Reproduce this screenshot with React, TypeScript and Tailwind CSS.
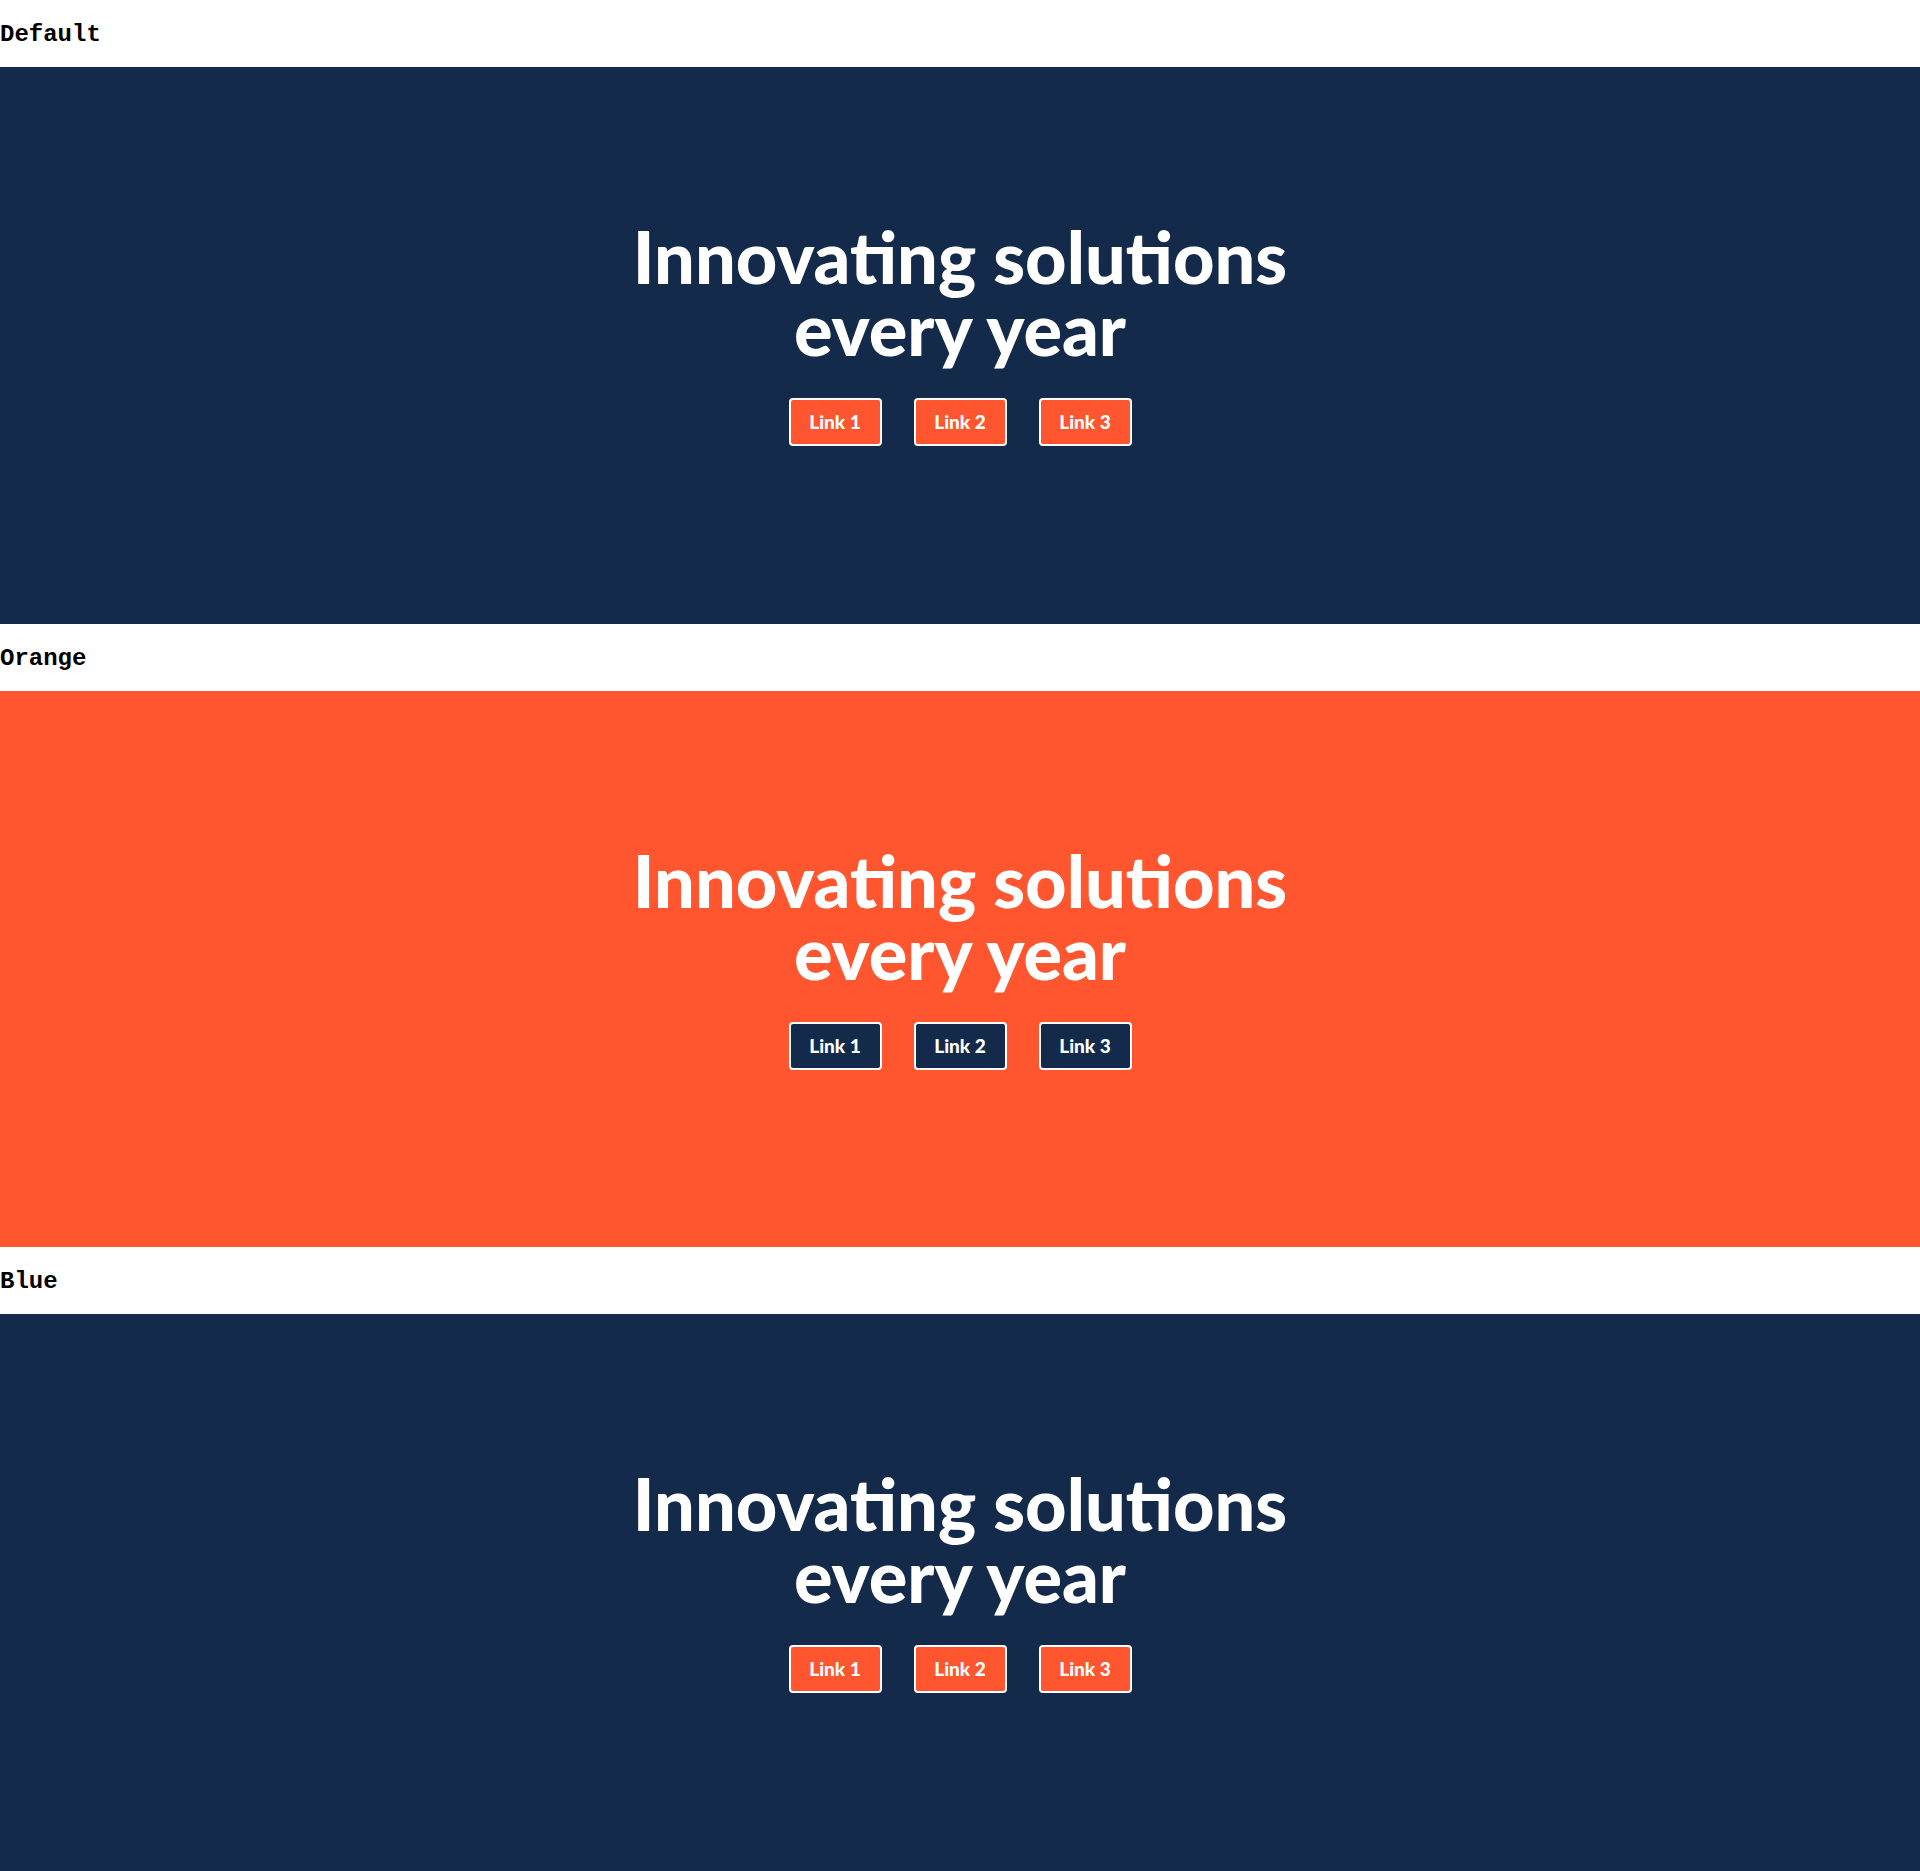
const variants = [
  { label: 'Default', band: 'bg-[#142a4b]', button: 'bg-[#ff5630]', h: 'h-[557px]' },
  { label: 'Orange', band: 'bg-[#ff5630]', button: 'bg-[#142a4b]', h: 'h-[556px]' },
  { label: 'Blue', band: 'bg-[#142a4b]', button: 'bg-[#ff5630]', h: 'h-[557px]' },
];

function Hero({ band, button, h }: { band: string; button: string; h: string }) {
  return (
    <section className={`${band} ${h} flex flex-col items-center pt-[153px]`}>
      <h1 className="text-center text-white font-black text-[72px] leading-[72px] font-['Lato',sans-serif]">
        Innovating solutions
        <br />
        every year
      </h1>
      <div className="flex gap-8 mt-[34px]">
        {['Link 1', 'Link 2', 'Link 3'].map((link) => (
          <a
            key={link}
            href="#"
            className={`${button} w-[93px] h-12 flex items-center justify-center border-2 border-white rounded text-white font-black text-[19px] font-['Lato',sans-serif]`}
          >
            {link}
          </a>
        ))}
      </div>
    </section>
  );
}

export default function App() {
  return (
    <div className="bg-white">
      {variants.map((v) => (
        <div key={v.label}>
          <h2 className="h-[67px] pt-[17px] text-[24px] leading-normal font-bold text-black font-['Liberation_Mono',monospace]">
            {v.label}
          </h2>
          <Hero band={v.band} button={v.button} h={v.h} />
        </div>
      ))}
    </div>
  );
}
